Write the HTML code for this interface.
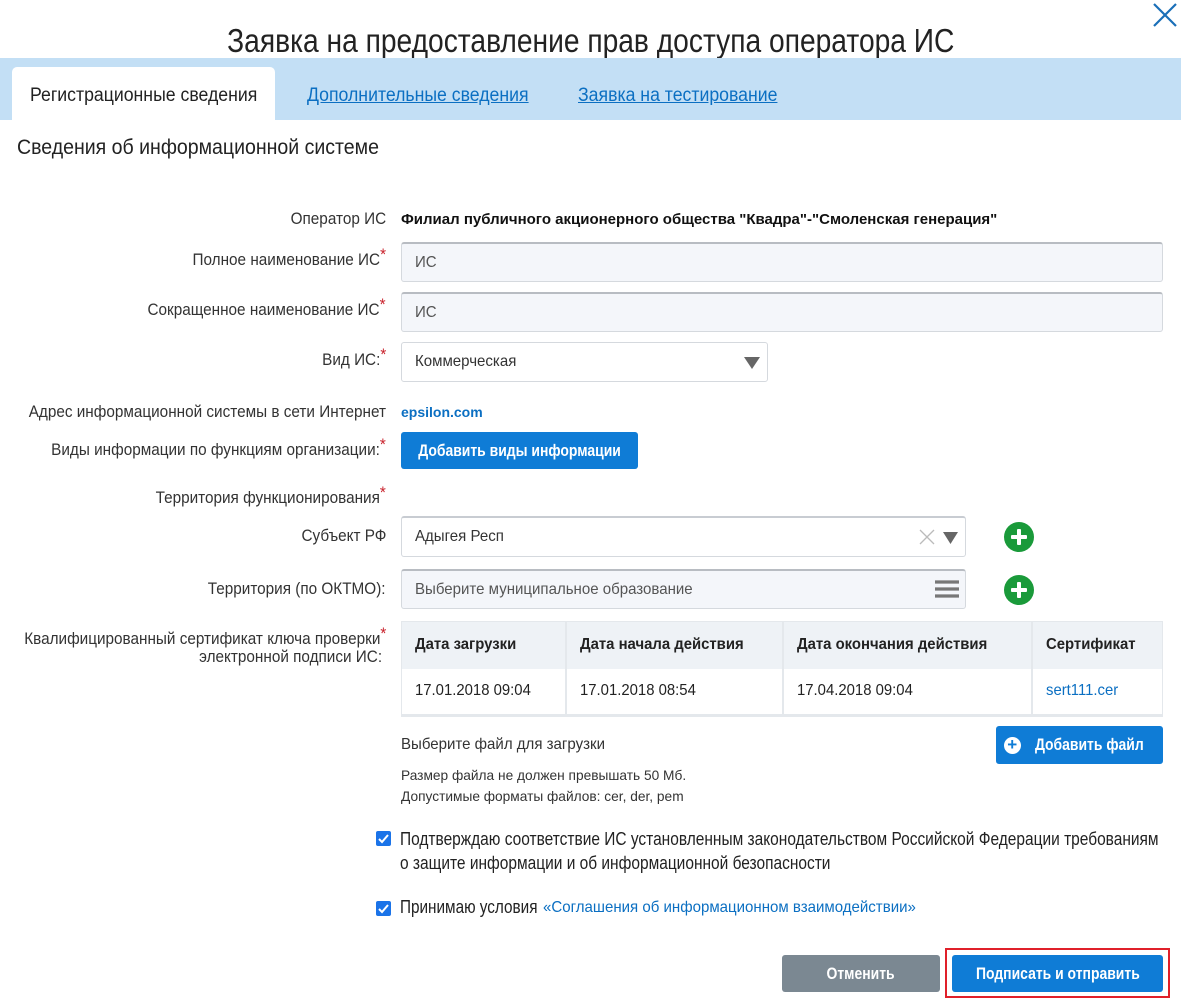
<!DOCTYPE html>
<html><head><meta charset="utf-8"><style>
*{margin:0;padding:0;box-sizing:border-box}
body{width:1181px;height:999px;background:#fff;position:relative;overflow:hidden;font-family:"Liberation Sans",sans-serif;color:#222;font-size:17px}
.a{position:absolute;white-space:nowrap}
.s{display:inline-block;transform-origin:left center;white-space:nowrap}
.lbl{position:absolute;right:795px;text-align:right;white-space:nowrap;font-size:17px;color:#333;transform:scaleX(.9);transform-origin:right center}
.st{color:#c8202a;font-size:17px;position:relative;top:-5px}
.inp{position:absolute;border:1px solid #d5d9de;border-top:2px solid #b8bcc2;border-radius:3px;background:#f4f6fa;font-size:16px;color:#555;padding-left:13px;display:flex;align-items:center}
.inp span{transform:scaleX(.94);transform-origin:left center;white-space:nowrap}
.btn{position:absolute;background:#0f7cd6;color:#fff;border-radius:3px;display:flex;align-items:center;justify-content:center;font-size:17px;font-weight:bold;white-space:nowrap}
.btn span{transform:scaleX(.82);display:inline-block}
.plus{position:absolute;width:30px;height:30px;border-radius:50%;background:#1a9a3a}
.plus:before,.plus:after{content:"";position:absolute;background:#fff;left:13px;top:7px;width:4px;height:16px;border-radius:1px}
.plus:after{left:7px;top:13px;width:16px;height:4px}
.cb{position:absolute;width:15px;height:15px;background:#1a73e8;border-radius:2px}
td,th{border-right:2px solid #e4e8ec;padding-left:13px;text-align:left;font-size:16px;white-space:nowrap}
td span,th span{display:inline-block;transform:scaleX(.93);transform-origin:left center}
</style></head><body>
<svg class="a" style="left:1152px;top:3px" width="26" height="24"><path d="M2 1L24 23M24 1L2 23" stroke="#1a6fb8" stroke-width="2.2"/></svg>
<div class="a" style="left:0;width:1181px;text-align:center;top:22px;font-size:33px;color:#222"><span class="s" style="transform:scaleX(.854);transform-origin:center">Заявка на предоставление прав доступа оператора ИС</span></div>
<div class="a" style="left:0;top:58px;width:1181px;height:62px;background:#c3dff5"></div>
<div class="a" style="left:12px;top:67px;width:263px;height:53px;background:#fff;border-radius:5px 5px 0 0"></div>
<div class="a" style="left:30px;top:85px;font-size:19px;color:#222"><span class="s" style="transform:scaleX(.93)">Регистрационные сведения</span></div>
<div class="a" style="left:307px;top:85px;font-size:19px;color:#0b6fc2"><span class="s" style="transform:scaleX(.93);text-decoration:underline">Дополнительные сведения</span></div>
<div class="a" style="left:578px;top:85px;font-size:19px;color:#0b6fc2"><span class="s" style="transform:scaleX(.93);text-decoration:underline">Заявка на тестирование</span></div>
<div class="a" style="left:17px;top:136px;font-size:21px;color:#222"><span class="s" style="transform:scaleX(.93)">Сведения об информационной системе</span></div>

<div class="lbl" style="top:209px">Оператор ИС</div>
<div class="a" style="left:401px;top:211px;font-weight:bold;font-size:15px;color:#111">Филиал публичного акционерного общества "Квадра"-"Смоленская генерация"</div>

<div class="lbl" style="top:250px">Полное наименование ИС<span class="st">*</span></div>
<div class="inp" style="left:401px;top:242px;width:762px;height:40px"><span>ИС</span></div>
<div class="lbl" style="top:300px">Сокращенное наименование ИС<span class="st">*</span></div>
<div class="inp" style="left:401px;top:292px;width:762px;height:40px"><span>ИС</span></div>
<div class="lbl" style="top:350px">Вид ИС:<span class="st">*</span></div>
<div class="inp" style="left:401px;top:342px;width:367px;height:40px;background:#fff;border-top:1px solid #d5d9de;color:#333"><span>Коммерческая</span></div>
<svg class="a" style="left:744px;top:357px" width="16" height="12"><path d="M0 0H16L8 12Z" fill="#666"/></svg>

<div class="lbl" style="top:402px">Адрес информационной системы в сети Интернет</div>
<div class="a" style="left:401px;top:404px;font-weight:bold;font-size:14px;color:#0b6fc2">epsilon.com</div>
<div class="lbl" style="top:440px">Виды информации по функциям организации:<span class="st">*</span></div>
<div class="btn" style="left:401px;top:432px;width:237px;height:37px"><span>Добавить виды информации</span></div>
<div class="lbl" style="top:488px">Территория функционирования<span class="st">*</span></div>

<div class="lbl" style="top:526px">Субъект РФ</div>
<div class="inp" style="left:401px;top:516px;width:565px;height:41px;background:#fff;border-top:2px solid #c8ccd2;color:#333"><span>Адыгея Респ</span></div>
<svg class="a" style="left:919px;top:529px" width="40" height="16"><path d="M1 1L15 15M15 1L1 15" stroke="#bbb" stroke-width="1.3"/><path d="M24 3H39L31.5 15Z" fill="#666"/></svg>
<div class="plus" style="left:1004px;top:522px"></div>

<div class="lbl" style="top:579px">Территория (по ОКТМО):</div>
<div class="inp" style="left:401px;top:569px;width:565px;height:40px"><span>Выберите муниципальное образование</span></div>
<svg class="a" style="left:935px;top:580px" width="24" height="18"><path d="M0 2H24M0 9H24M0 16H24" stroke="#777" stroke-width="3.2"/></svg>
<div class="plus" style="left:1004px;top:575px"></div>

<div class="lbl" style="top:630px;line-height:18px">Квалифицированный сертификат ключа проверки<span class="st">*</span><br>электронной подписи ИС:&nbsp;</div>
<table class="a" style="left:401px;top:621px;width:762px;border-collapse:collapse;border:1px solid #e4e8ec;border-bottom:3px solid #e4e8ec;table-layout:fixed">
<tr style="height:47px;background:#eef2f6"><th style="width:164px"><span>Дата загрузки</span></th><th style="width:217px"><span>Дата начала действия</span></th><th style="width:249px"><span>Дата окончания действия</span></th><th style="border:0"><span>Сертификат</span></th></tr>
<tr style="height:47px"><td><span>17.01.2018 09:04</span></td><td><span>17.01.2018 08:54</span></td><td><span>17.04.2018 09:04</span></td><td style="border:0;color:#0b6fc2"><span>sert111.cer</span></td></tr>
</table>
<div class="a" style="left:401px;top:736px;font-size:16px;color:#333"><span class="s" style="transform:scaleX(.94)">Выберите файл для загрузки</span></div>
<div class="btn" style="left:996px;top:726px;width:167px;height:38px"><span style="display:inline-block;width:17px;height:17px;border-radius:50%;background:#fff;color:#0f7cd6;font-size:17px;line-height:16px;text-align:center;margin-right:2px;transform:none">+</span><span>Добавить файл</span></div>
<div class="a" style="left:401px;top:767px;font-size:14px;color:#333"><span class="s" style="transform:scaleX(.98)">Размер файла не должен превышать 50 Мб.</span></div>
<div class="a" style="left:401px;top:788px;font-size:14px;color:#333"><span class="s" style="transform:scaleX(.98)">Допустимые форматы файлов: cer, der, pem</span></div>

<div class="cb" style="left:376px;top:831px"></div>
<svg class="a" style="left:376px;top:831px" width="15" height="15"><path d="M3 8L6 11L12 4" stroke="#fff" stroke-width="2" fill="none"/></svg>
<div class="a" style="left:400px;top:827px;font-size:18px;line-height:24px;color:#222"><span class="s" style="transform:scaleX(.86)">Подтверждаю соответствие ИС установленным законодательством Российской Федерации требованиям<br>о защите информации и об информационной безопасности</span></div>
<div class="cb" style="left:376px;top:901px"></div>
<svg class="a" style="left:376px;top:901px" width="15" height="15"><path d="M3 8L6 11L12 4" stroke="#fff" stroke-width="2" fill="none"/></svg>
<div class="a" style="left:400px;top:897px;font-size:18px;color:#222"><span class="s" style="transform:scaleX(.85)">Принимаю условия</span></div>
<div class="a" style="left:543px;top:899px;font-size:16px;color:#0b6fc2"><span class="s" style="transform:scaleX(.94)">«Соглашения об информационном взаимодействии»</span></div>

<div class="btn" style="left:782px;top:955px;width:158px;height:37px;background:#7b8892"><span>Отменить</span></div>
<div class="a" style="left:945px;top:948px;width:225px;height:50px;border:2px solid #e0202a"></div>
<div class="btn" style="left:952px;top:955px;width:211px;height:37px"><span>Подписать и отправить</span></div>
</body></html>
